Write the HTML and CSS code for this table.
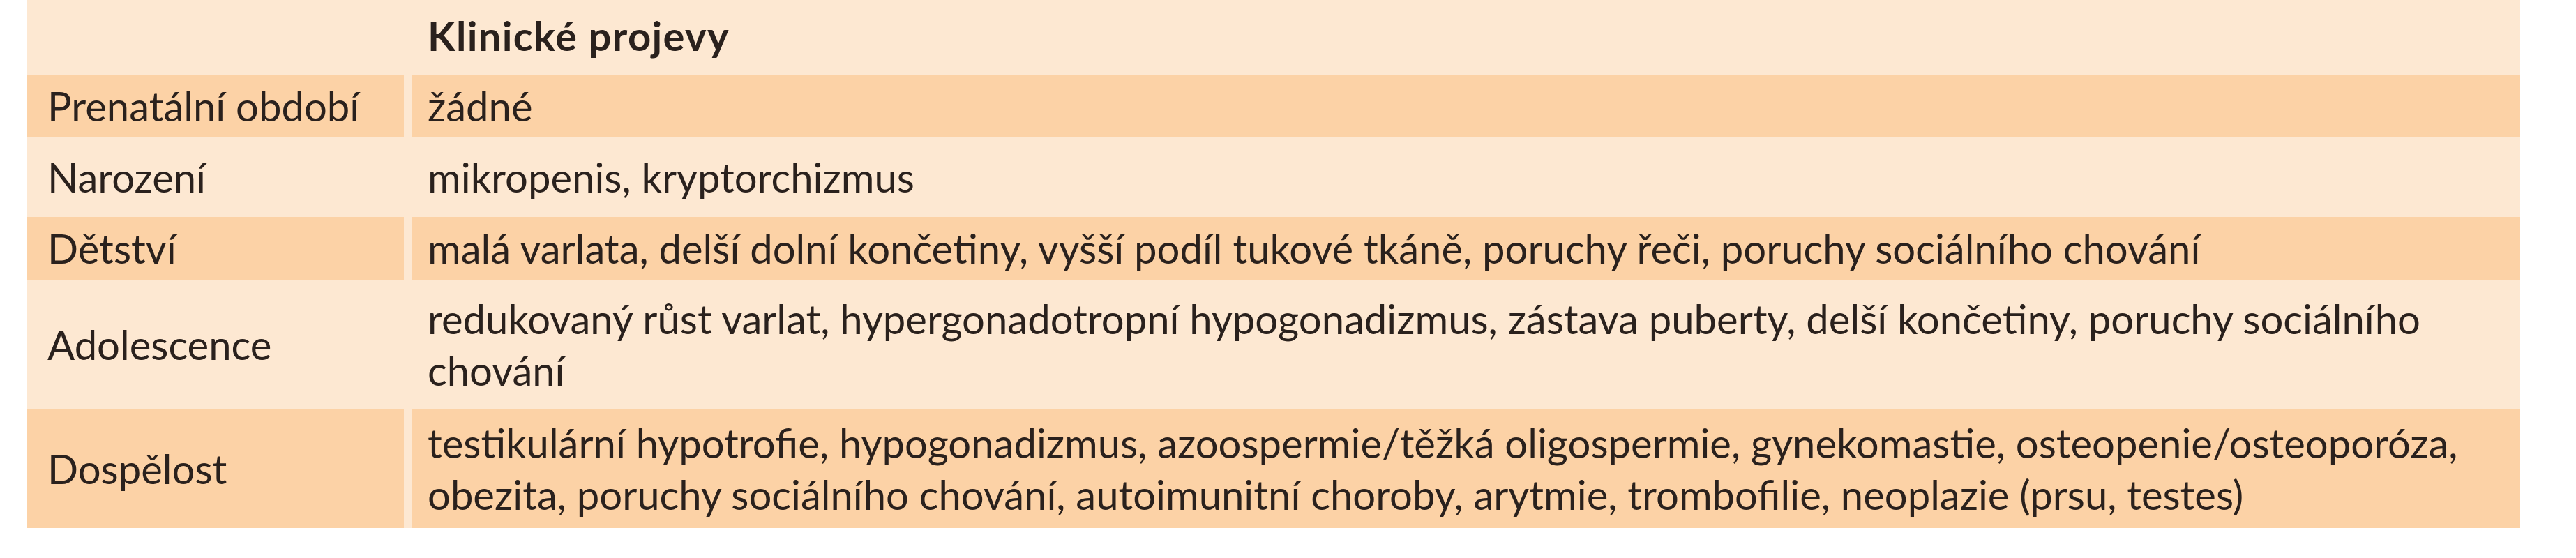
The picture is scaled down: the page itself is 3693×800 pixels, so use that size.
FILE: index.html
```html
<!DOCTYPE html>
<html lang="cs">
<head>
<meta charset="utf-8">
<title>Klinické projevy</title>
<link rel="stylesheet" href="styles.css">
</head>
<body>
<div class="table">
  <div class="row row-head">
    <div class="cell label"></div>
    <div class="cell content head">Klinické projevy</div>
  </div>
  <div class="row row-prenatal dark">
    <div class="cell label">Prenatální období</div>
    <div class="cell content">žádné</div>
  </div>
  <div class="row row-birth">
    <div class="cell label">Narození</div>
    <div class="cell content">mikropenis, kryptorchizmus</div>
  </div>
  <div class="row row-child dark">
    <div class="cell label">Dětství</div>
    <div class="cell content">malá varlata, delší dolní končetiny, vyšší podíl tukové tkáně, poruchy řeči, poruchy sociálního chování</div>
  </div>
  <div class="row row-adol">
    <div class="cell label">Adolescence</div>
    <div class="cell content">redukovaný růst varlat, hypergonadotropní hypogonadizmus, zástava puberty, delší končetiny, poruchy sociálního<br>chování</div>
  </div>
  <div class="row row-adult dark">
    <div class="cell label">Dospělost</div>
    <div class="cell content">testikulární hypotrofie, hypogonadizmus, azoospermie/těžká oligospermie, gynekomastie, osteopenie/osteoporóza,<br>obezita, poruchy sociálního chování, autoimunitní choroby, arytmie, trombofilie, neoplazie (prsu, testes)</div>
  </div>
</div>
</body>
</html>
```

FILE: styles.css
```css
html, body {
  margin: 0;
  padding: 0;
  background: #ffffff;
}

body {
  font-family: "Lato", "Open Sans", "Liberation Sans", sans-serif;
  font-size: 58px;
  line-height: 74px;
  color: #2a211d;
}

.table {
  margin-left: 38px;
  width: 3575px;
  background: #fde8d2;
  display: flex;
  flex-direction: column;
}

.row {
  display: grid;
  grid-template-columns: 541px 1fr;
  column-gap: 11px;
}

.cell {
  display: flex;
  align-items: center;
  white-space: nowrap;
}

.label {
  padding-left: 30px;
}

.content {
  padding-left: 23px;
}

.dark .cell {
  background: #fcd2a6;
}

.head {
  font-weight: 700;
  letter-spacing: 1.3px;
  padding-bottom: 6px;
}

.row-head { height: 107px; }
.row-prenatal { height: 89px; }
.row-birth { height: 115px; }
.row-child { height: 90px; }
.row-adol { height: 185px; }
.row-adult { height: 171px; }
```
